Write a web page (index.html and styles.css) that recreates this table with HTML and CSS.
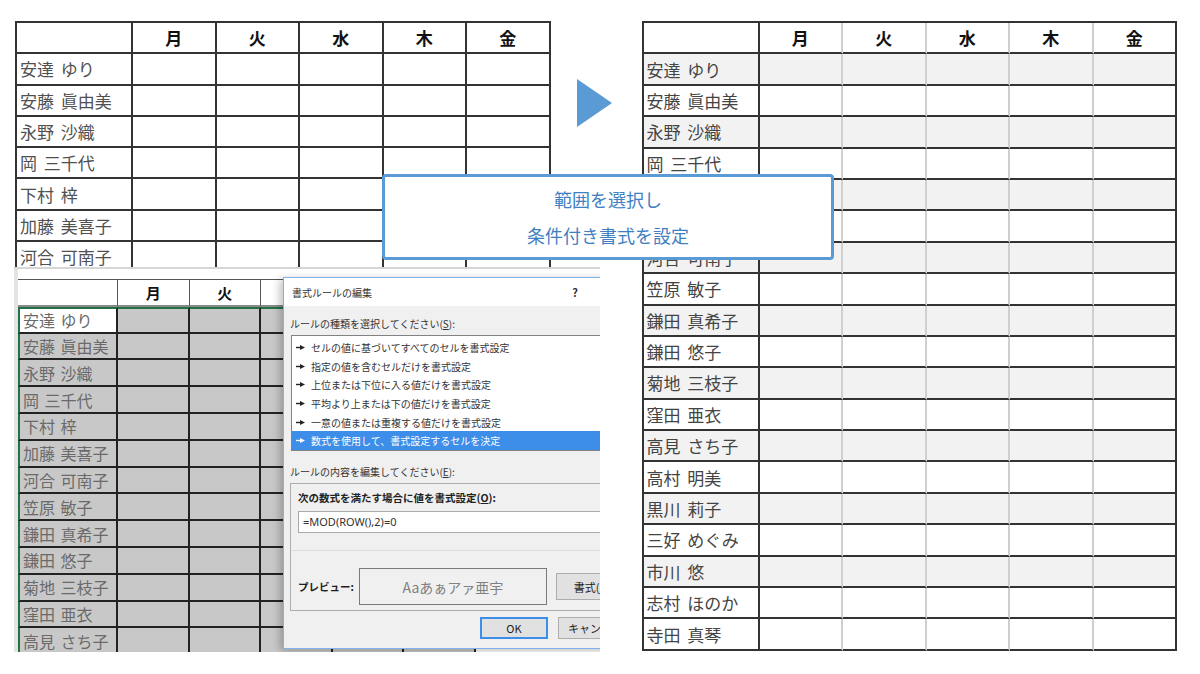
FILE: index.html
```html
<!DOCTYPE html>
<html lang="ja">
<head>
<meta charset="utf-8">
<title>条件付き書式</title>
<link rel="stylesheet" href="styles.css">
</head>
<body>
<div class="canvas">
  <div class="left-clip">
    <div class="grid grid-top">
      <div class="row head"><div></div><div>月</div><div>火</div><div>水</div><div>木</div><div>金</div></div>
      <div class="row"><div class="nm">安達 ゆり</div><div></div><div></div><div></div><div></div><div></div></div>
      <div class="row"><div class="nm">安藤 眞由美</div><div></div><div></div><div></div><div></div><div></div></div>
      <div class="row"><div class="nm">永野 沙織</div><div></div><div></div><div></div><div></div><div></div></div>
      <div class="row"><div class="nm">岡 三千代</div><div></div><div></div><div></div><div></div><div></div></div>
      <div class="row"><div class="nm">下村 梓</div><div></div><div></div><div></div><div></div><div></div></div>
      <div class="row"><div class="nm">加藤 美喜子</div><div></div><div></div><div></div><div></div><div></div></div>
      <div class="row"><div class="nm">河合 可南子</div><div></div><div></div><div></div><div></div><div></div></div>
    </div>
  </div>

  <div class="arrow">
    <svg width="35" height="48" viewBox="0 0 35 48"><polygon points="0,0 35,24 0,48" fill="#5b9bd5"/></svg>
  </div>

  <div class="grid grid-right">
    <div class="row head"><div></div><div>月</div><div>火</div><div>水</div><div>木</div><div>金</div></div>
    <div class="row alt"><div class="nm">安達 ゆり</div><div></div><div></div><div></div><div></div><div></div></div>
    <div class="row"><div class="nm">安藤 眞由美</div><div></div><div></div><div></div><div></div><div></div></div>
    <div class="row alt"><div class="nm">永野 沙織</div><div></div><div></div><div></div><div></div><div></div></div>
    <div class="row"><div class="nm">岡 三千代</div><div></div><div></div><div></div><div></div><div></div></div>
    <div class="row alt"><div class="nm">下村 梓</div><div></div><div></div><div></div><div></div><div></div></div>
    <div class="row"><div class="nm">加藤 美喜子</div><div></div><div></div><div></div><div></div><div></div></div>
    <div class="row alt"><div class="nm">河合 可南子</div><div></div><div></div><div></div><div></div><div></div></div>
    <div class="row"><div class="nm">笠原 敏子</div><div></div><div></div><div></div><div></div><div></div></div>
    <div class="row alt"><div class="nm">鎌田 真希子</div><div></div><div></div><div></div><div></div><div></div></div>
    <div class="row"><div class="nm">鎌田 悠子</div><div></div><div></div><div></div><div></div><div></div></div>
    <div class="row alt"><div class="nm">菊地 三枝子</div><div></div><div></div><div></div><div></div><div></div></div>
    <div class="row"><div class="nm">窪田 亜衣</div><div></div><div></div><div></div><div></div><div></div></div>
    <div class="row alt"><div class="nm">高見 さち子</div><div></div><div></div><div></div><div></div><div></div></div>
    <div class="row"><div class="nm">高村 明美</div><div></div><div></div><div></div><div></div><div></div></div>
    <div class="row alt"><div class="nm">黒川 莉子</div><div></div><div></div><div></div><div></div><div></div></div>
    <div class="row"><div class="nm">三好 めぐみ</div><div></div><div></div><div></div><div></div><div></div></div>
    <div class="row alt"><div class="nm">市川 悠</div><div></div><div></div><div></div><div></div><div></div></div>
    <div class="row"><div class="nm">志村 ほのか</div><div></div><div></div><div></div><div></div><div></div></div>
    <div class="row"><div class="nm">寺田 真琴</div><div></div><div></div><div></div><div></div><div></div></div>
  </div>

  <div class="shot">
    <div class="shot-inner">
      <div class="grid grid-shot">
        <div class="row head"><div></div><div>月</div><div>火</div><div></div><div></div><div></div></div>
        <div class="row sel first"><div class="nm active">安達 ゆり</div><div></div><div></div><div></div><div></div><div></div></div>
        <div class="row sel"><div class="nm">安藤 眞由美</div><div></div><div></div><div></div><div></div><div></div></div>
        <div class="row sel"><div class="nm">永野 沙織</div><div></div><div></div><div></div><div></div><div></div></div>
        <div class="row sel"><div class="nm">岡 三千代</div><div></div><div></div><div></div><div></div><div></div></div>
        <div class="row sel"><div class="nm">下村 梓</div><div></div><div></div><div></div><div></div><div></div></div>
        <div class="row sel"><div class="nm">加藤 美喜子</div><div></div><div></div><div></div><div></div><div></div></div>
        <div class="row sel"><div class="nm">河合 可南子</div><div></div><div></div><div></div><div></div><div></div></div>
        <div class="row sel"><div class="nm">笠原 敏子</div><div></div><div></div><div></div><div></div><div></div></div>
        <div class="row sel"><div class="nm">鎌田 真希子</div><div></div><div></div><div></div><div></div><div></div></div>
        <div class="row sel"><div class="nm">鎌田 悠子</div><div></div><div></div><div></div><div></div><div></div></div>
        <div class="row sel"><div class="nm">菊地 三枝子</div><div></div><div></div><div></div><div></div><div></div></div>
        <div class="row sel"><div class="nm">窪田 亜衣</div><div></div><div></div><div></div><div></div><div></div></div>
        <div class="row sel"><div class="nm">高見 さち子</div><div></div><div></div><div></div><div></div><div></div></div>
      </div>
    </div>

    <div class="dialog">
      <div class="dlg-title"><span>書式ルールの編集</span><span class="help">?</span></div>
      <div class="dlg-body">
        <div class="dlg-label">ルールの種類を選択してください(<u>S</u>):</div>
        <div class="listbox">
          <div class="item"><svg class="bul" width="9" height="5" viewBox="0 0 9 5"><path d="M0 2.5H5" stroke="#222" stroke-width="1.4"/><path d="M4 0L9 2.5L4 5Z" fill="#222"/></svg>セルの値に基づいてすべてのセルを書式設定</div>
          <div class="item"><svg class="bul" width="9" height="5" viewBox="0 0 9 5"><path d="M0 2.5H5" stroke="#222" stroke-width="1.4"/><path d="M4 0L9 2.5L4 5Z" fill="#222"/></svg>指定の値を含むセルだけを書式設定</div>
          <div class="item"><svg class="bul" width="9" height="5" viewBox="0 0 9 5"><path d="M0 2.5H5" stroke="#222" stroke-width="1.4"/><path d="M4 0L9 2.5L4 5Z" fill="#222"/></svg>上位または下位に入る値だけを書式設定</div>
          <div class="item"><svg class="bul" width="9" height="5" viewBox="0 0 9 5"><path d="M0 2.5H5" stroke="#222" stroke-width="1.4"/><path d="M4 0L9 2.5L4 5Z" fill="#222"/></svg>平均より上または下の値だけを書式設定</div>
          <div class="item"><svg class="bul" width="9" height="5" viewBox="0 0 9 5"><path d="M0 2.5H5" stroke="#222" stroke-width="1.4"/><path d="M4 0L9 2.5L4 5Z" fill="#222"/></svg>一意の値または重複する値だけを書式設定</div>
          <div class="item selected"><svg class="bul" width="9" height="5" viewBox="0 0 9 5"><path d="M0 2.5H5" stroke="#fff" stroke-width="1.4"/><path d="M4 0L9 2.5L4 5Z" fill="#fff"/></svg>数式を使用して、書式設定するセルを決定</div>
        </div>
        <div class="dlg-label label2">ルールの内容を編集してください(<u>E</u>):</div>
        <div class="rulebox">
          <div class="bold-label">次の数式を満たす場合に値を書式設定(<u>O</u>):</div>
          <div class="formula">=MOD(ROW(),2)=0</div>
          <div class="sep"></div>
          <div class="preview-row">
            <div class="bold-label pv-label">プレビュー:</div>
            <div class="preview">Aaあぁアァ亜宇</div>
            <div class="btn fmt-btn">書式(<u>F</u>)...</div>
          </div>
        </div>
        <div class="btn-row">
          <div class="btn ok">OK</div>
          <div class="btn cancel">キャンセル</div>
        </div>
      </div>
    </div>
  </div>

  <div class="callout">
    <div>範囲を選択し</div>
    <div>条件付き書式を設定</div>
  </div>
</div>
</body>
</html>
```

FILE: styles.css
```css
* { box-sizing: border-box; }
html, body { margin: 0; padding: 0; background: #fff; }
body { font-family: "Noto Sans CJK JP", "Noto Sans", sans-serif; }

.canvas {
  position: relative;
  width: 1200px;
  height: 674px;
  overflow: hidden;
  display: flex;
  align-items: flex-start;
  padding-top: 21px;
  background: #fff;
}

/* generic grid table */
.grid { display: grid; }
.row { display: contents; }
.row > div {
  display: flex;
  align-items: center;
  justify-content: center;
  overflow: hidden;
  white-space: pre;
}
.row > .nm { justify-content: flex-start; word-spacing: 3px; }
.head > div { font-weight: 700; color: #111; }

/* top-left sheet */
.left-clip {
  margin-left: 15px;
  height: 247px;
  overflow: hidden;
  flex: none;
}
.grid-top {
  grid-template-columns: 116px repeat(5, 83.5px);
  grid-auto-rows: 31.3px;
  border-top: 2px solid #333;
  border-left: 2px solid #333;
}
.grid-top .row > div {
  border-right: 2px solid #333;
  border-bottom: 2px solid #333;
  font-size: 17px;
}
.grid-top .nm { padding-left: 3px; color: #505050; font-size: 18px; }

/* arrow */
.arrow {
  flex: none;
  margin-left: 26px;
  margin-top: 58px;
  line-height: 0;
}

/* right sheet */
.grid-right {
  flex: none;
  margin-left: 30px;
  grid-template-columns: 116px repeat(5, 83.5px);
  grid-auto-rows: 31.4px;
  border-top: 2px solid #333;
  border-left: 2px solid #333;
}
.grid-right .row > div {
  border-right: 2px solid #cfcfcf;
  border-bottom: 2px solid #333;
  font-size: 17px;
}
.grid-right .row > div:first-child,
.grid-right .row > div:last-child { border-right-color: #333; }
.grid-right .nm { padding-left: 3px; color: #444; font-size: 18px; }
.grid-right .alt > div { background: #f2f2f2; }

/* screenshot overlay (bottom-left) */
.shot {
  position: absolute;
  left: 14px;
  top: 267px;
  width: 586px;
  height: 385px;
  overflow: hidden;
  background: #fff;
  border-top: 2px solid #d6d6d6;
}
.shot-inner {
  height: 100%;
  padding-top: 10px;
  border-left: 4px solid #e4e4e4;
  background: #fff;
}
.grid-shot {
  grid-template-columns: 100px repeat(5, 71.5px);
  grid-auto-rows: 26.8px;
  border-top: 1px solid #555;
}
.grid-shot .row > div {
  border-right: 2px solid #222;
  border-bottom: 2px solid #222;
  font-size: 16px;
}
.grid-shot .head > div { border-bottom-color: #8a8a8a; border-right-color: #555; border-right-width: 1px; font-size: 15px; }
.grid-shot .sel > div { background: #c8c8c8; }
.grid-shot .sel > div:first-child { border-left: 2px solid #217346; }
.grid-shot .first > div { border-top: 2px solid #217346; }
.grid-shot .nm { padding-left: 3px; color: #6a6a6a; font-size: 15px; word-spacing: 2px; }
.grid-shot .sel > .active { background: #fff; }

/* dialog */
.dialog {
  position: absolute;
  left: 269px;
  top: 8px;
  width: 340px;
  height: 372px;
  background: #f0f0f0;
  border: 1px solid #7eb4ea;
  box-shadow: -3px 2px 8px rgba(0, 0, 0, 0.25);
  font-size: 10px;
  color: #222;
}
.dlg-title {
  height: 28px;
  background: #fff;
  display: flex;
  align-items: center;
  padding-left: 8px;
  font-size: 10px;
  color: #333;
}
.help {
  margin-left: auto;
  margin-right: 44px;
  font-weight: 700;
  font-size: 11px;
}
.dlg-body { padding-left: 6px; }
.dlg-label { margin-top: 11px; height: 14px; line-height: 14px; color: #333; }
.label2 { margin-top: 14px; }
.listbox {
  margin-top: 4px;
  margin-left: 1px;
  height: 116px;
  background: #fff;
  border: 1px solid #828282;
  padding-top: 2px;
}
.item {
  height: 18.7px;
  display: flex;
  align-items: center;
  padding-left: 4px;
  color: #333;
}
.item .bul { margin-right: 6px; flex: none; }
.item.selected { background: #3c8ee8; color: #fff; }

.rulebox {
  margin-top: 4px;
  height: 128px;
  border: 1px solid #adadad;
  padding: 7px 0 0 7px;
}
.bold-label { font-weight: 700; font-size: 10.5px; height: 14px; line-height: 14px; color: #222; }
.formula {
  margin-top: 6px;
  height: 22px;
  background: #fff;
  border: 1px solid #aaa;
  padding-left: 4px;
  font-family: "Noto Sans", "Noto Sans CJK JP", sans-serif;
  font-size: 11px;
  line-height: 20px;
  color: #333;
}
.sep { margin-top: 17px; margin-left: -7px; border-top: 1px solid #dcdcdc; }
.preview-row { margin-top: 17px; display: flex; align-items: center; }
.pv-label { width: 61px; flex: none; }
.preview {
  width: 188px;
  height: 37px;
  flex: none;
  border: 1px solid #7a7a7a;
  display: flex;
  align-items: center;
  justify-content: center;
  font-size: 14px;
  color: #808080;
}
.btn {
  background: #e1e1e1;
  border: 1px solid #adadad;
  display: flex;
  align-items: center;
  justify-content: center;
  font-size: 11px;
  color: #222;
  flex: none;
}
.fmt-btn { margin-left: 9px; width: 80px; height: 27px; }
.btn-row { display: flex; margin-top: 6px; padding-left: 190px; }
.ok { width: 68px; height: 22px; border: 2px solid #3c8ee8; }
.cancel { margin-left: 10px; width: 75px; height: 22px; }

/* callout */
.callout {
  position: absolute;
  left: 382px;
  top: 174px;
  width: 452px;
  height: 86px;
  background: #fff;
  border: 3px solid #5b9bd5;
  border-radius: 4px;
  padding-top: 4px;
  text-align: center;
  color: #3f7fc2;
  font-size: 18px;
  line-height: 36px;
  z-index: 5;
}
```
